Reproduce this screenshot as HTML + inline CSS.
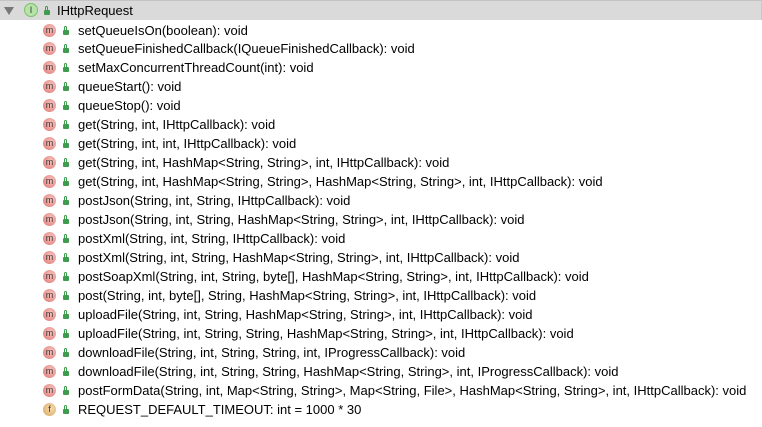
<!DOCTYPE html>
<html><head><style>
body{margin:0;width:762px;height:427px;background:#fff;font-family:"Liberation Sans",sans-serif;font-size:13px;color:#000;overflow:hidden;position:relative}
.hdr{position:absolute;left:0;top:0;width:761px;height:19px;background:#dadada;border-top:1px solid #c4c4c4;border-right:1px solid #c8c8c8}
.row{position:absolute;left:0;height:19px;line-height:19px;white-space:nowrap}
.ic{position:absolute;top:3px;width:13px;height:13px;border-radius:50%}
.m{left:43px;background:radial-gradient(circle at 60% 40%,#f6c8c4,#e0706a);font-size:9px;line-height:12px;text-align:center;color:#333}
.lk{position:absolute;top:9px;width:6px;height:5px;background:#3e9c4e;border-radius:1px}
.lk:before{content:"";position:absolute;left:1px;top:-4px;width:3px;height:4px;border:1px solid #3e9c4e;border-bottom:none;border-radius:2px 2px 0 0;box-sizing:border-box}
.t{position:absolute;left:78px}
</style></head><body>
<div class="hdr"></div>
<div class="row" style="top:1px">
<div style="position:absolute;left:4px;top:6px;width:0;height:0;border-left:5px solid transparent;border-right:5px solid transparent;border-top:8px solid #777"></div>
<div class="ic" style="left:24px;top:2px;width:14px;height:14px;background:#b6e3a8;border:1px solid #7fbf6e;box-sizing:border-box;font-size:9px;line-height:12px;text-align:center;color:#333">I</div>
<div class="lk" style="left:44px"></div>
<span style="position:absolute;left:57px">IHttpRequest</span>
</div>
<div id="list"></div>
<script>
var items=["setQueueIsOn(boolean): void","setQueueFinishedCallback(IQueueFinishedCallback): void","setMaxConcurrentThreadCount(int): void","queueStart(): void","queueStop(): void","get(String, int, IHttpCallback): void","get(String, int, int, IHttpCallback): void","get(String, int, HashMap<String, String>, int, IHttpCallback): void","get(String, int, HashMap<String, String>, HashMap<String, String>, int, IHttpCallback): void","postJson(String, int, String, IHttpCallback): void","postJson(String, int, String, HashMap<String, String>, int, IHttpCallback): void","postXml(String, int, String, IHttpCallback): void","postXml(String, int, String, HashMap<String, String>, int, IHttpCallback): void","postSoapXml(String, int, String, byte[], HashMap<String, String>, int, IHttpCallback): void","post(String, int, byte[], String, HashMap<String, String>, int, IHttpCallback): void","uploadFile(String, int, String, HashMap<String, String>, int, IHttpCallback): void","uploadFile(String, int, String, String, HashMap<String, String>, int, IHttpCallback): void","downloadFile(String, int, String, String, int, IProgressCallback): void","downloadFile(String, int, String, String, HashMap<String, String>, int, IProgressCallback): void","postFormData(String, int, Map<String, String>, Map<String, File>, HashMap<String, String>, int, IHttpCallback): void","REQUEST_DEFAULT_TIMEOUT: int = 1000 * 30"];
var h="";
items.forEach(function(s,i){
var top=20.5+i*18.95;
var e=s.replace(/&/g,"&amp;").replace(/</g,"&lt;").replace(/>/g,"&gt;");
var icon=i==20?'<div class="ic" style="left:43px;background:radial-gradient(circle at 60% 40%,#f6dcb0,#d9a55a);font-size:9px;line-height:12px;text-align:center;color:#333">f</div>':'<div class="ic m">m</div>';
h+='<div class="row" style="top:'+top+'px">'+icon+'<div class="lk" style="left:63px"></div><span class="t">'+e+'</span></div>';
});
document.getElementById("list").innerHTML=h;
</script>
</body></html>
